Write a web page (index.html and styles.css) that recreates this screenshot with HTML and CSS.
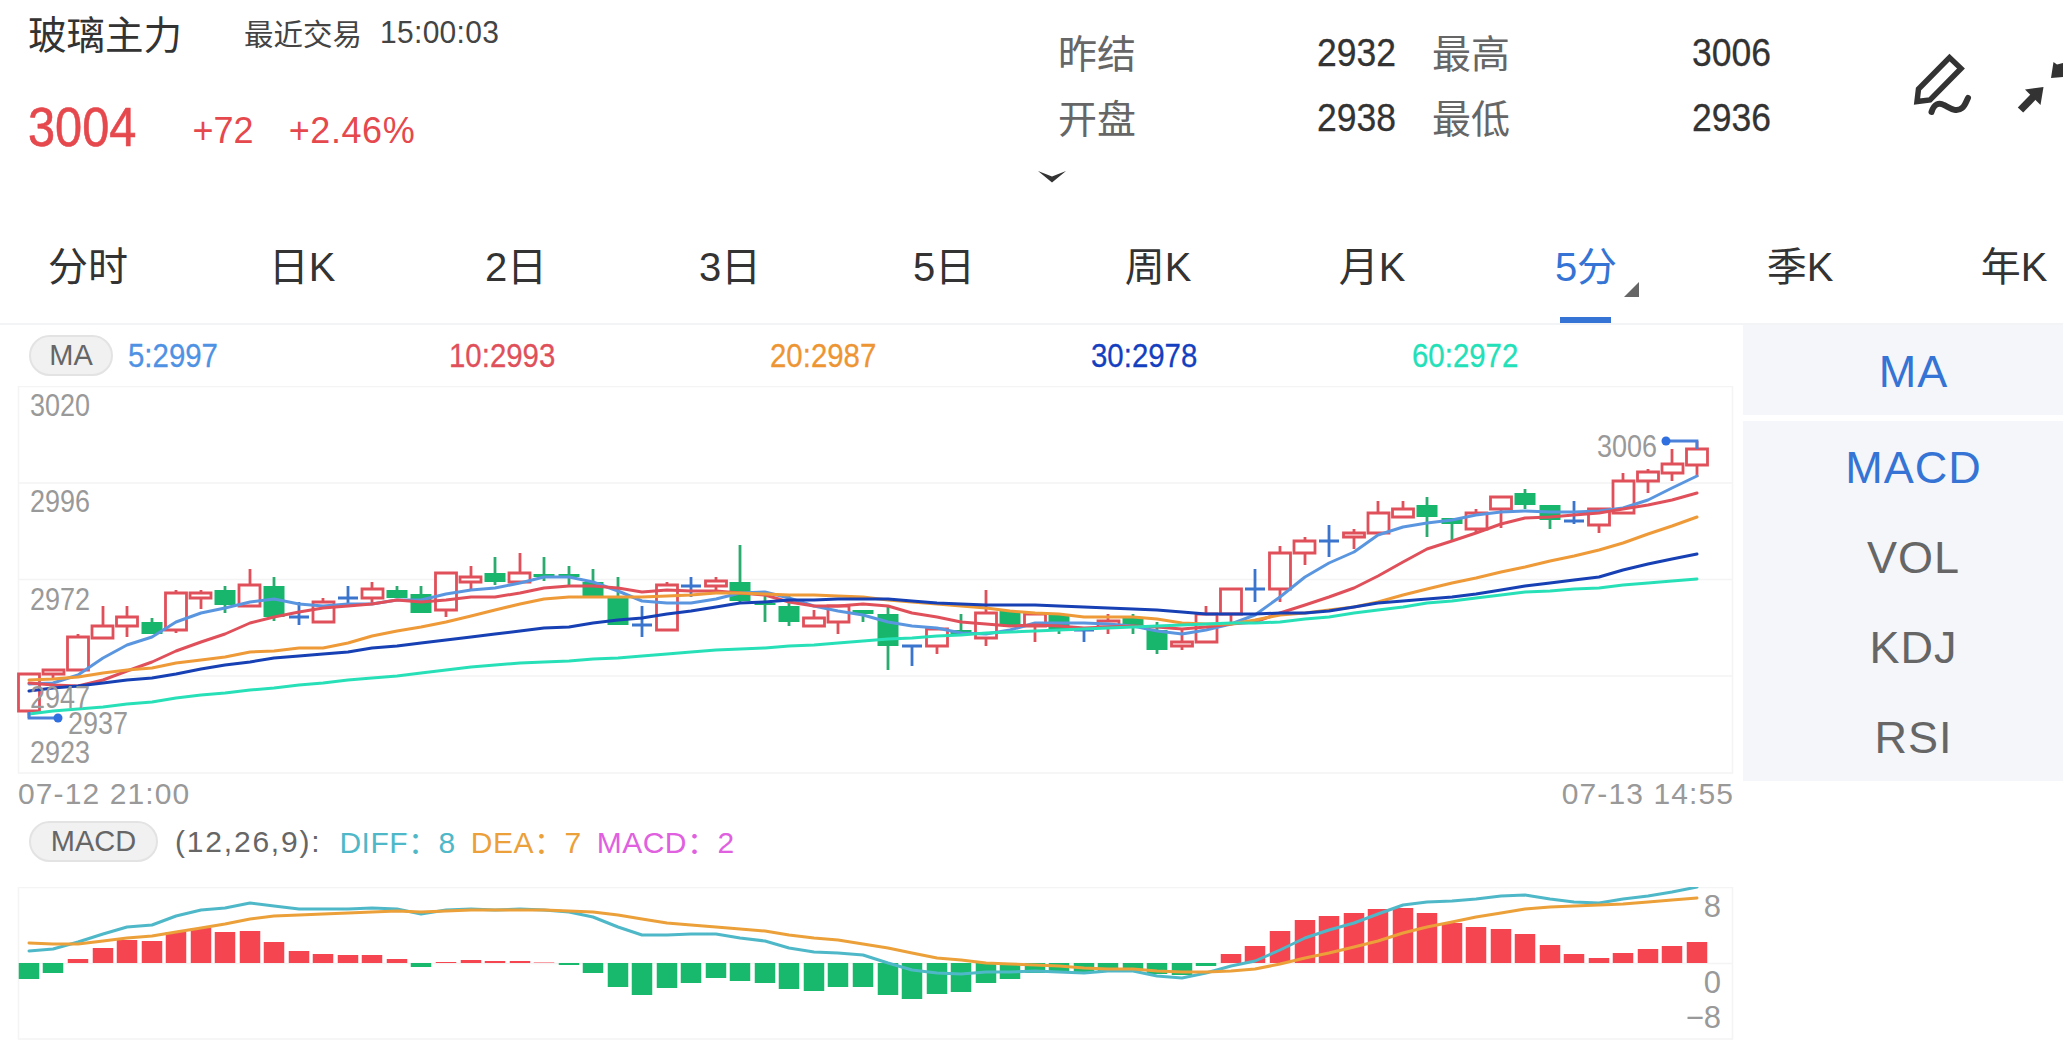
FILE: index.html
```html
<!DOCTYPE html>
<html lang="zh">
<head>
<meta charset="utf-8">
<title>玻璃主力</title>
<link rel="stylesheet" href="styles.css">
</head>
<body>
<div class="page">
  <header class="header">
    <div class="quote">
      <div class="title-row">
        <span class="name">玻璃主力</span>
        <span class="trade">最近交易</span>
        <span class="clock">15:00:03</span>
      </div>
      <div class="price-row">
        <span class="price">3004</span>
        <span class="chg chg-abs">+72</span>
        <span class="chg chg-pct">+2.46%</span>
      </div>
    </div>
    <div class="stats-col">
      <div class="stats">
        <span class="stat-label">昨结</span><span class="stat-val">2932</span>
        <span class="stat-label">最高</span><span class="stat-val">3006</span>
        <span class="stat-label">开盘</span><span class="stat-val">2938</span>
        <span class="stat-label">最低</span><span class="stat-val">2936</span>
      </div>
      <svg class="chevron" width="30" height="13" viewBox="0 0 30 13"><path d="M1 1 L15 6.500 L29 1 L15 12.500 Z"/></svg>
    </div>
    <svg class="tools" width="173" height="110" viewBox="0 0 173 110">
      <path class="tool-line" d="M27 71.500 L28.500 59 L59.500 27.500 L71 38.500 L40 70 Z"/>
      <path class="tool-wave" d="M41.500 82 C44 74 49 72 54 75 C60 78 66 83 72 78 C75 76 76 72 78 68"/>
      <path class="tool-shaft" d="M130.500 80 L146 64"/>
      <path class="tool-fill" d="M135 59.500 L153.500 57 L150.500 75 Z"/>
      <path class="tool-fill" d="M161 48 L163.500 32 L167 34.500 L173 33 L173 47 Z"/>
    </svg>
  </header>

  <nav class="tabs">
    <span class="tab">分时</span>
    <span class="tab">日K</span>
    <span class="tab">2日</span>
    <span class="tab">3日</span>
    <span class="tab">5日</span>
    <span class="tab">周K</span>
    <span class="tab">月K</span>
    <span class="tab tab-active">5分</span>
    <span class="tab">季K</span>
    <span class="tab">年K</span>
  </nav>

  <main class="content">
    <section class="charts">
      <div class="legend">
        <span class="pill pill-ma">MA</span>
        <span class="ma-val c-ma5">5:2997</span>
        <span class="ma-val c-ma10">10:2993</span>
        <span class="ma-val c-ma20">20:2987</span>
        <span class="ma-val c-ma30">30:2978</span>
        <span class="ma-val c-ma60">60:2972</span>
      </div>

      <svg class="kline" width="1743" height="388" viewBox="0 386 1743 388">
        <path class="grid" d="M18.500 386.500H1732.500V773H18.500ZM18 483H1733M18 579.500H1733M18 676H1733"/>
        <path class="wick-red" d="M29 711V718M53 674V680M78 634V637M103 606V626M127 606V637M176 590V633M201 590V609M250 569V585M323 598V602M372 582V603M446 610V617M471 566V589M520 553V573M667 582V585M716 577V593M814 610V626M838 622V634M937 627V654M986 590V646M1035 626V642M1108 614V634M1182 630V650M1206 606V614M1231 614V623M1280 546V602M1305 537V565M1354 529V549M1378 501V513M1403 501V509M1476 509V533M1501 497V528M1599 525V533M1623 473V481M1648 469V493M1672 449V481M1697 441V477"/>
        <path class="wick-green" d="M152 618V634M225 586V613M274 577V621M397 586V598M421 586V613M495 557V585M544 557V581M569 566V585M593 569V596M618 577V625M740 545V603M765 592V622M789 595V626M863 610V622M888 607V670M961 614V634M1010 611V627M1059 614V634M1133 614V634M1157 622V654M1427 497V537M1452 518V540M1525 489V509M1550 505V529"/>
        <path class="body-red" d="M18.500 674h21v37h-21zM43 670h21v4h-21zM67.500 637h21v33h-21zM92 626h21v12h-21zM116.500 617h21v9h-21zM165.500 593h21v37h-21zM190 593h21v5h-21zM239 585h21v21h-21zM313 602h21v20h-21zM362 589h21v9h-21zM435.500 573h21v37h-21zM460 577h21v5h-21zM509 573h21v9h-21zM656.500 585h21v45h-21zM705.500 581h21v5h-21zM803.500 618h21v8h-21zM828 606h21v16h-21zM926.500 629h21v17h-21zM975.500 613h21v25h-21zM1024.500 614h21v12h-21zM1098 621h21v6h-21zM1171.500 642h21v4h-21zM1196 614h21v28h-21zM1220.500 589h21v25h-21zM1269.500 553h21v36h-21zM1294 541h21v12h-21zM1343.500 533h21v4h-21zM1368 513h21v20h-21zM1392.500 509h21v8h-21zM1466 513h21v16h-21zM1490.500 497h21v12h-21zM1588.500 509h21v16h-21zM1613 481h21v32h-21zM1637.500 472h21v9h-21zM1662 464h21v9h-21zM1686.500 449h21v16h-21z"/>
        <path class="body-green" d="M152 622V634M225 590V605M274 586V617M397 590V598M421 594V613M495 573V582M544 574V577M569 574V577M593 582V596M618 597V625M740 582V601M765 603V605M789 606V622M863 610V614M888 614V646M961 630V634M1010 611V625M1059 614V629M1133 618V626M1157 630V650M1427 505V517M1452 518V524M1525 493V505M1550 505V520"/>
        <path class="doji" d="M289 617H309M299 602V625M338 598H358M348 586V605M632 625H652M642 606V637M681 586H701M691 577V597M902 646H922M912 646V666M1074 630H1094M1084 630V642M1245 589H1265M1255 569V602M1319 541H1339M1329 525V557M1564 521H1584M1574 501V524"/>
        <polyline class="line ma5" points="29,684 53,683 78,675 103,658 127,645 152,637 176,622 201,613 225,608 250,602 274,599 299,604 323,606 348,604 372,604 397,600 421,600 446,594 471,590 495,588 520,583 544,577 569,577 593,582 618,591 642,601 667,603 691,603 716,599 740,593 765,592 789,598 814,606 838,611 863,615 888,622 912,626 937,628 961,633 986,634 1010,630 1035,623 1059,623 1084,623 1108,624 1133,626 1157,631 1182,634 1206,630 1231,624 1255,615 1280,597 1305,577 1329,563 1354,552 1378,535 1403,527 1427,523 1452,520 1476,515 1501,512 1525,511 1550,512 1574,512 1599,511 1623,508 1648,500 1672,488 1697,476"/>
        <polyline class="line ma10" points="29,683 53,685 78,686 103,680 127,671 152,662 176,651 201,642 225,634 250,623 274,617 299,612 323,608 348,606 372,604 397,600 421,602 446,600 471,597 495,597 520,593 544,588 569,586 593,586 618,588 642,592 667,590 691,591 716,591 740,593 765,595 789,602 814,606 838,606 863,604 888,606 912,613 937,617 961,622 986,624 1010,626 1035,625 1059,626 1084,628 1108,627 1133,626 1157,627 1182,629 1206,627 1231,624 1255,622 1280,613 1305,605 1329,597 1354,588 1378,576 1403,562 1427,549 1452,541 1476,533 1501,524 1525,518 1550,517 1574,515 1599,513 1623,509 1648,505 1672,500 1697,493"/>
        <polyline class="line ma20" points="29,680 53,679 78,677 103,673 127,670 152,668 176,663 201,660 225,657 250,652 274,651 299,648 323,648 348,643 372,636 397,631 421,627 446,622 471,616 495,610 520,604 544,599 569,597 593,597 618,597 642,597 667,596 691,595 716,593 740,593 765,594 789,595 814,595 838,596 863,597 888,600 912,602 937,604 961,606 986,608 1010,611 1035,613 1059,614 1084,617 1108,617 1133,617 1157,619 1182,623 1206,624 1231,624 1255,620 1280,615 1305,613 1329,610 1354,607 1378,602 1403,595 1427,589 1452,583 1476,578 1501,572 1525,567 1550,561 1574,556 1599,550 1623,543 1648,534 1672,526 1697,517"/>
        <polyline class="line ma30" points="29,691 53,688 78,686 103,683 127,680 152,678 176,674 201,669 225,665 250,662 274,658 299,656 323,654 348,652 372,648 397,646 421,643 446,640 471,637 495,634 520,631 544,628 569,627 593,623 618,620 642,618 667,614 691,611 716,607 740,603 765,602 789,600 814,600 838,599 863,599 888,599 912,601 937,603 961,604 986,605 1010,605 1035,605 1059,606 1084,607 1108,608 1133,609 1157,610 1182,612 1206,614 1231,614 1255,614 1280,613 1305,613 1329,611 1354,607 1378,603 1403,601 1427,599 1452,597 1476,594 1501,590 1525,586 1550,583 1574,580 1599,577 1623,570 1648,564 1672,559 1697,554"/>
        <polyline class="line ma60" points="29,714 53,711 78,709 103,707 127,704 152,702 176,698 201,695 225,693 250,690 274,688 299,685 323,683 348,680 372,678 397,676 421,673 446,670 471,667 495,665 520,663 544,662 569,661 593,659 618,658 642,656 667,654 691,652 716,650 740,649 765,648 789,646 814,645 838,643 863,641 888,639 912,638 937,636 961,635 986,633 1010,632 1035,631 1059,630 1084,629 1108,628 1133,627 1157,626 1182,625 1206,624 1231,623 1255,623 1280,622 1305,619 1329,617 1354,613 1378,610 1403,607 1427,603 1452,601 1476,598 1501,595 1525,592 1550,591 1574,589 1599,588 1623,585 1648,583 1672,581 1697,579"/>
        <path class="marker" d="M29 712V718H58M1666 441H1697V449"/>
        <circle class="marker-dot" cx="58" cy="718" r="4.500"/>
        <circle class="marker-dot" cx="1666" cy="441" r="4.500"/>
        <text class="axis" x="30" y="416" textLength="60" lengthAdjust="spacingAndGlyphs">3020</text>
        <text class="axis" x="30" y="512" textLength="60" lengthAdjust="spacingAndGlyphs">2996</text>
        <text class="axis" x="30" y="610" textLength="60" lengthAdjust="spacingAndGlyphs">2972</text>
        <text class="axis" x="30" y="708" textLength="60" lengthAdjust="spacingAndGlyphs">2947</text>
        <text class="axis" x="30" y="763" textLength="60" lengthAdjust="spacingAndGlyphs">2923</text>
        <text class="axis" x="68" y="734" textLength="60" lengthAdjust="spacingAndGlyphs">2937</text>
        <text class="axis" x="1597" y="457" textLength="60" lengthAdjust="spacingAndGlyphs">3006</text>
      </svg>

      <div class="time-axis">
        <span>07-12 21:00</span>
        <span>07-13 14:55</span>
      </div>

      <div class="macd-head">
        <span class="pill pill-macd">MACD</span>
        <span class="macd-param">(12,26,9):</span>
        <span class="macd-val c-diff">DIFF：8</span>
        <span class="macd-val c-dea">DEA：7</span>
        <span class="macd-val c-macd">MACD：2</span>
      </div>

      <svg class="macd" width="1743" height="153" viewBox="0 886 1743 153">
        <path class="grid" d="M18.500 886.500H1732.500V1038H18.500ZM18 962.500H1733"/>
        <path class="bar-green" d="M29 962V978M53 962V972M421 962V966M569 962V964M593 962V972M618 962V986M642 962V994M667 962V987M691 962V982M716 962V977M740 962V980M765 962V982M789 962V988M814 962V990M838 962V986M863 962V986M888 962V994M912 962V998M937 962V993M961 962V991M986 962V982M1010 962V978M1035 962V972M1059 962V972M1084 962V972M1108 962V970M1133 962V970M1157 962V973M1182 962V974M1206 962V965"/>
        <path class="bar-red" d="M78 962V958M103 962V947M127 962V939M152 962V940M176 962V931M201 962V927M225 962V931M250 962V930M274 962V941M299 962V950M323 962V953M348 962V954M372 962V954M397 962V958M446 962V961M471 962V959M495 962V960M520 962V960M544 962V961.500M1231 962V953M1255 962V945M1280 962V930M1305 962V919M1329 962V915M1354 962V912M1378 962V908M1403 962V907M1427 962V912M1452 962V922M1476 962V926M1501 962V928M1525 962V933M1550 962V944M1574 962V953M1599 962V957M1623 962V952M1648 962V948M1672 962V945M1697 962V941"/>
        <polyline class="line diff" points="29,950 53,948 78,941 103,933 127,926 152,924 176,915 201,909 225,907 250,902 274,905 299,908 323,908 348,908 372,907 397,908 421,913 446,909 471,908 495,909 520,908 544,909 569,911 593,916 618,926 642,934 667,934 691,933 716,933 740,937 765,940 789,947 814,951 838,952 863,954 888,962 912,969 937,972 961,973 986,971 1010,971 1035,970 1059,971 1084,972 1108,970 1133,970 1157,975 1182,977 1206,972 1231,965 1255,960 1280,949 1305,937 1329,929 1354,922 1378,913 1403,904 1427,901 1452,900 1476,898 1501,895 1525,894 1550,898 1574,901 1599,902 1623,898 1648,895 1672,891 1697,886"/>
        <polyline class="line dea" points="29,942 53,943 78,943 103,940 127,937 152,935 176,931 201,927 225,923 250,918 274,915 299,914 323,913 348,912 372,911 397,910 421,911 446,910 471,909 495,909 520,909 544,909 569,910 593,911 618,914 642,918 667,922 691,924 716,926 740,928 765,930 789,934 814,937 838,939 863,943 888,947 912,952 937,957 961,959 986,962 1010,963 1035,964 1059,965 1084,967 1108,968 1133,968 1157,970 1182,971 1206,971 1231,970 1255,968 1280,963 1305,957 1329,952 1354,946 1378,940 1403,932 1427,926 1452,921 1476,916 1501,912 1525,908 1550,906 1574,905 1599,904 1623,903 1648,901 1672,899 1697,897"/>
        <text class="axis-small" x="1721" y="916">8</text>
        <text class="axis-small" x="1721" y="992">0</text>
        <text class="axis-small" x="1721" y="1027">−8</text>
      </svg>
    </section>

    <aside class="side">
      <div class="side-box side-box-top"><span class="side-item side-active">MA</span></div>
      <div class="side-box">
        <span class="side-item side-active">MACD</span>
        <span class="side-item">VOL</span>
        <span class="side-item">KDJ</span>
        <span class="side-item">RSI</span>
      </div>
    </aside>
  </main>
</div>
</body>
</html>
```

FILE: styles.css
```css
* { box-sizing: border-box; }
html, body { margin: 0; padding: 0; background: #fff; }
body { font-family: "Liberation Sans", "Noto Sans CJK SC", sans-serif; color: #333; }
.page { width: 2063px; height: 1054px; overflow: hidden; }

.header { display: flex; height: 230px; }
.quote { width: 1059px; padding-left: 28px; }
.title-row { display: flex; align-items: center; height: 70px; }
.name { font-size: 38.500px; color: #333; margin-top: -6px; }
.trade { font-size: 29.500px; margin-left: 62px; color: #444; margin-top: -6px; }
.clock { font-size: 30px; margin-left: 18px; color: #444; margin-top: -6px; letter-spacing: .3px; transform: scaleY(1.05); }
.price-row { display: flex; margin-top: 30px; color: #e5484d; }
.price { font-size: 56px; line-height: 54px; transform: scaleX(.87); transform-origin: left center; -webkit-text-stroke: .6px #e5484d; }
.chg { font-size: 36px; line-height: 54px; margin-top: 4px; }
.chg-abs { margin-left: 40px; }
.chg-pct { margin-left: 35px; letter-spacing: .6px; }

.stats-col { width: 712px; padding-top: 20px; }
.stats { display: grid; grid-template-columns: 76px 261px 37px 76px 262px; grid-auto-rows: 65px; align-items: center; }
.stats .stat-label:nth-of-type(4n+3) { grid-column: 4; }
.stat-label { font-size: 39px; line-height: 50px; color: #666; margin-left: -1px; margin-top: 4px; white-space: nowrap; }
.stat-val { font-size: 39px; color: #333; text-align: right; transform: scaleX(.91); transform-origin: right center; margin-top: 1px; -webkit-text-stroke: .3px #333; }
.stats .stat-val:nth-of-type(4n) { grid-column: 5; }
.chevron { display: block; margin: 20px 0 0 -22px; fill: #333; }

.tools { margin-left: auto; margin-top: 30px; flex: none; }
.tool-line { fill: none; stroke: #333; stroke-width: 5.500; stroke-linejoin: miter; }
.tool-wave { fill: none; stroke: #333; stroke-width: 6; stroke-linecap: round; }
.tool-shaft { stroke: #333; stroke-width: 7.500; }
.tool-fill { fill: #333; }

.tabs { display: flex; height: 95px; margin-left: -19px; width: 2160px; padding-bottom: 2px; border-bottom: 2px solid #f3f4f6; position: relative; }
.tab { position: relative; flex: 0 0 214px; text-align: center; font-size: 40px; line-height: 74px; color: #333; }
.tab-active { color: #3574d4; }
.tab-active::after { content: ""; position: absolute; left: 81px; top: 87px; width: 51px; height: 6px; background: #3574d4; }
.tab-active::before { content: ""; position: absolute; left: 145px; top: 52px; width: 0; height: 0; border-style: solid; border-width: 0 0 15px 15px; border-color: transparent transparent #666 transparent; }

.content { display: flex; }
.charts { width: 1743px; flex: none; }
.legend { display: flex; align-items: center; height: 61px; padding: 0 0 1px 29px; }
.pill { display: flex; align-items: center; justify-content: center; height: 41px; background: #f1f1f1; border: 2px solid #e3e3e3; border-radius: 21px; color: #666; font-size: 29px; }
.pill-ma { width: 84px; margin-right: 15px; flex: none; }
.ma-val { flex: 0 0 321px; font-size: 34px; line-height: 40px; transform: scaleX(.865); transform-origin: left center; -webkit-text-stroke: .3px currentColor; }
.c-ma5 { color: #4f92e4; }
.c-ma10 { color: #e0505a; }
.c-ma20 { color: #ee9533; }
.c-ma30 { color: #1440c0; }
.c-ma60 { color: #22e0b8; }

.kline, .macd { display: block; }
.grid { fill: none; stroke: #f4f4f4; stroke-width: 1.500; }
.wick-red { stroke: #e0505a; stroke-width: 2.800; fill: none; }
.wick-green { stroke: #2bab6e; stroke-width: 2.800; fill: none; }
.body-red { fill: #fff; stroke: #e0505a; stroke-width: 2.800; }
.body-green { stroke: #18b56c; stroke-width: 21; fill: none; }
.doji { stroke: #3a74cc; stroke-width: 2.800; fill: none; }
.line { fill: none; stroke-width: 3; stroke-linejoin: round; stroke-linecap: round; }
.ma5 { stroke: #5a96e0; }
.ma10 { stroke: #e0505a; }
.ma20 { stroke: #ee9a38; }
.ma30 { stroke: #1640b4; }
.ma60 { stroke: #28e0b8; }
.marker { fill: none; stroke: #4a80d8; stroke-width: 2.800; }
.marker-dot { fill: #2f6fe0; }
.axis { font-size: 31px; fill: #999; }
.axis-small { font-size: 31px; fill: #999; text-anchor: end; }

.time-axis { display: flex; justify-content: space-between; width: 1734px; padding-left: 18px; height: 42px; line-height: 40px; font-size: 30px; letter-spacing: 1.100px; color: #999; }

.macd-head { display: flex; align-items: center; height: 71px; padding: 0 0 20px 29px; font-size: 30px; }
.pill-macd { width: 129px; flex: none; }
.macd-param { margin-left: 17px; color: #666; letter-spacing: 1.800px; }
.macd-val { font-family: "Liberation Sans", "Noto Sans CJK TC", sans-serif; letter-spacing: .5px; line-height: 36px; margin-top: 2px; }
.c-diff { margin-left: 18px; color: #4fb8c8; }
.c-dea { margin-left: 15px; color: #eca03a; }
.c-macd { margin-left: 15px; color: #e060e0; }
.bar-red { stroke: #f54550; stroke-width: 20.500; fill: none; }
.bar-green { stroke: #18b96c; stroke-width: 20.500; fill: none; }
.diff { stroke: #4fb8c8; }
.dea { stroke: #eca03a; }

.side { flex: 1; display: flex; flex-direction: column; gap: 6px; }
.side-box { display: flex; flex-direction: column; background: #f4f6f9; }
.side-item { display: flex; align-items: center; justify-content: center; height: 90px; padding: 3px 0 0 21px; font-size: 45px; letter-spacing: 1px; color: #666; }
.side-active { color: #3574d4; }
```
